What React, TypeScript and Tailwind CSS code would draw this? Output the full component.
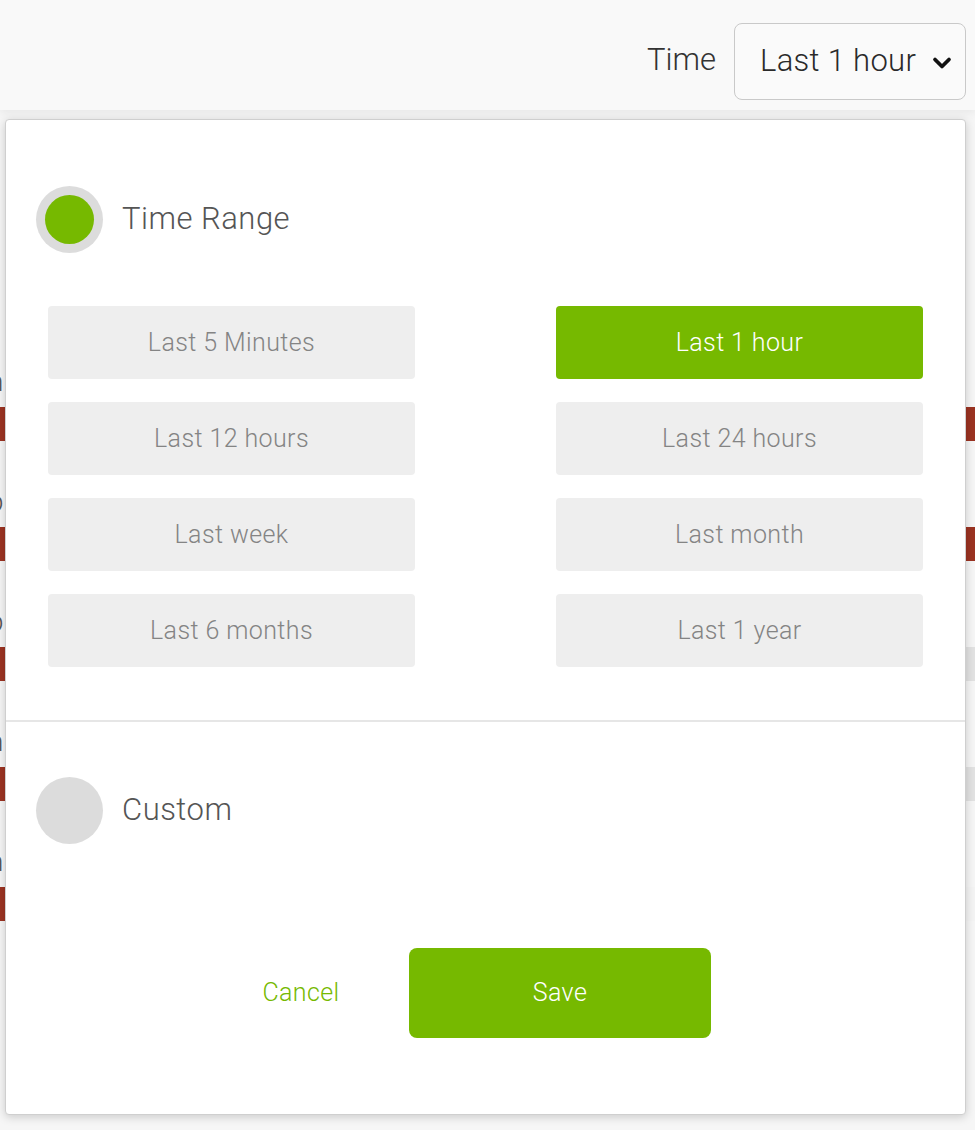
import { ChevronDown } from 'lucide-react';

const ranges = [
  'Last 5 Minutes',
  'Last 1 hour',
  'Last 12 hours',
  'Last 24 hours',
  'Last week',
  'Last month',
  'Last 6 months',
  'Last 1 year',
];

// rows of the page that sit behind the dialog
const bgRows = [
  { glyph: 'n', right: 'bg-[#9b3322]' },
  { glyph: 'p', right: 'bg-[#9b3322]' },
  { glyph: 'p', right: 'bg-[#e2e2e2]' },
  { glyph: 'h', right: 'bg-[#e2e2e2]' },
  { glyph: 'n', right: 'bg-[#f4f4f4]' },
];

export default function App() {
  const selected = 'Last 1 hour';

  return (
    <div
      className="relative w-[975px] h-[1130px] overflow-hidden bg-[#f6f6f6]"
      style={{ fontFamily: 'Roboto, "Open Sans", sans-serif' }}
    >
      {/* Header */}
      <div className="h-[110px] pt-[12px] bg-[#f9f9f9] flex items-center justify-end pr-[9px] shadow-[0_3px_8px_rgba(0,0,0,0.06)]">
        <span className="text-[31px] font-light text-[#333] mr-[18px] -mt-[2px]">Time</span>
        <div className="w-[232px] h-[77px] rounded-[8px] border border-[#c9c9c9] bg-[#fafafa] flex items-center pl-[25px] pr-[9px]">
          <span className="flex-1 text-[31px] font-light text-[#2a2a2a] tracking-[0.3px]">Last 1 hour</span>
          <ChevronDown size={28} strokeWidth={3.2} className="text-[#111] mt-[4px]" />
        </div>
      </div>

      {/* Page content behind the dialog */}
      <div className="pt-[246px] flex flex-col">
        {bgRows.map((row, i) => (
          <div key={i} className="h-[120px] flex flex-col">
            <div className="h-[40px] flex items-end">
              <span className="text-[28px] font-light text-[#555] -ml-[12px] leading-none">{row.glyph}</span>
            </div>
            <div className="h-[11px]" />
            <div className="h-[34px] flex justify-between">
              <div className="w-[6px] bg-[#9b3322]" />
              <div className={`w-[9px] ${row.right}`} />
            </div>
          </div>
        ))}
      </div>

      {/* Dialog */}
      <div className="absolute left-[5px] top-[119px] w-[961px] h-[996px] bg-white rounded-[4px] border border-[#cfcfcf] shadow-[0_2px_10px_rgba(0,0,0,0.18)] flex flex-col">
        <div className="pt-[66px] pl-[30px] flex items-center">
          <div className="w-[67px] h-[67px] rounded-full bg-[#dcdcdc] flex items-center justify-center">
            <div className="w-[49px] h-[49px] rounded-full bg-[#76b900]" />
          </div>
          <span className="ml-[19px] text-[31px] font-light text-[#555] tracking-[0.5px]">Time Range</span>
        </div>

        <div className="mt-[53px] px-[42px] grid grid-cols-2 gap-x-[141px] gap-y-[23px]">
          {ranges.map((r) => {
            const active = r === selected;
            return (
              <button
                key={r}
                className={`h-[73px] rounded-[4px] text-[25px] font-light tracking-[0.4px] ${
                  active ? 'bg-[#76b900] text-white' : 'bg-[#eeeeee] text-[#848484]'
                }`}
              >
                {r}
              </button>
            );
          })}
        </div>

        <div className="mt-[53px] h-[2px] bg-[#e6e6e6]" />

        <div className="mt-[55px] pl-[30px] flex items-center">
          <div className="w-[67px] h-[67px] rounded-full bg-[#dcdcdc]" />
          <span className="ml-[19px] text-[31px] font-light text-[#555] tracking-[0.5px]">Custom</span>
        </div>

        <div className="mt-[104px] pl-[230px] flex items-center">
          <button className="w-[130px] text-[25px] font-light text-[#76b900] tracking-[0.4px]">Cancel</button>
          <button className="ml-[43px] w-[302px] h-[90px] rounded-[8px] bg-[#76b900] text-white text-[25px] font-light tracking-[0.4px]">
            Save
          </button>
        </div>
      </div>
    </div>
  );
}
